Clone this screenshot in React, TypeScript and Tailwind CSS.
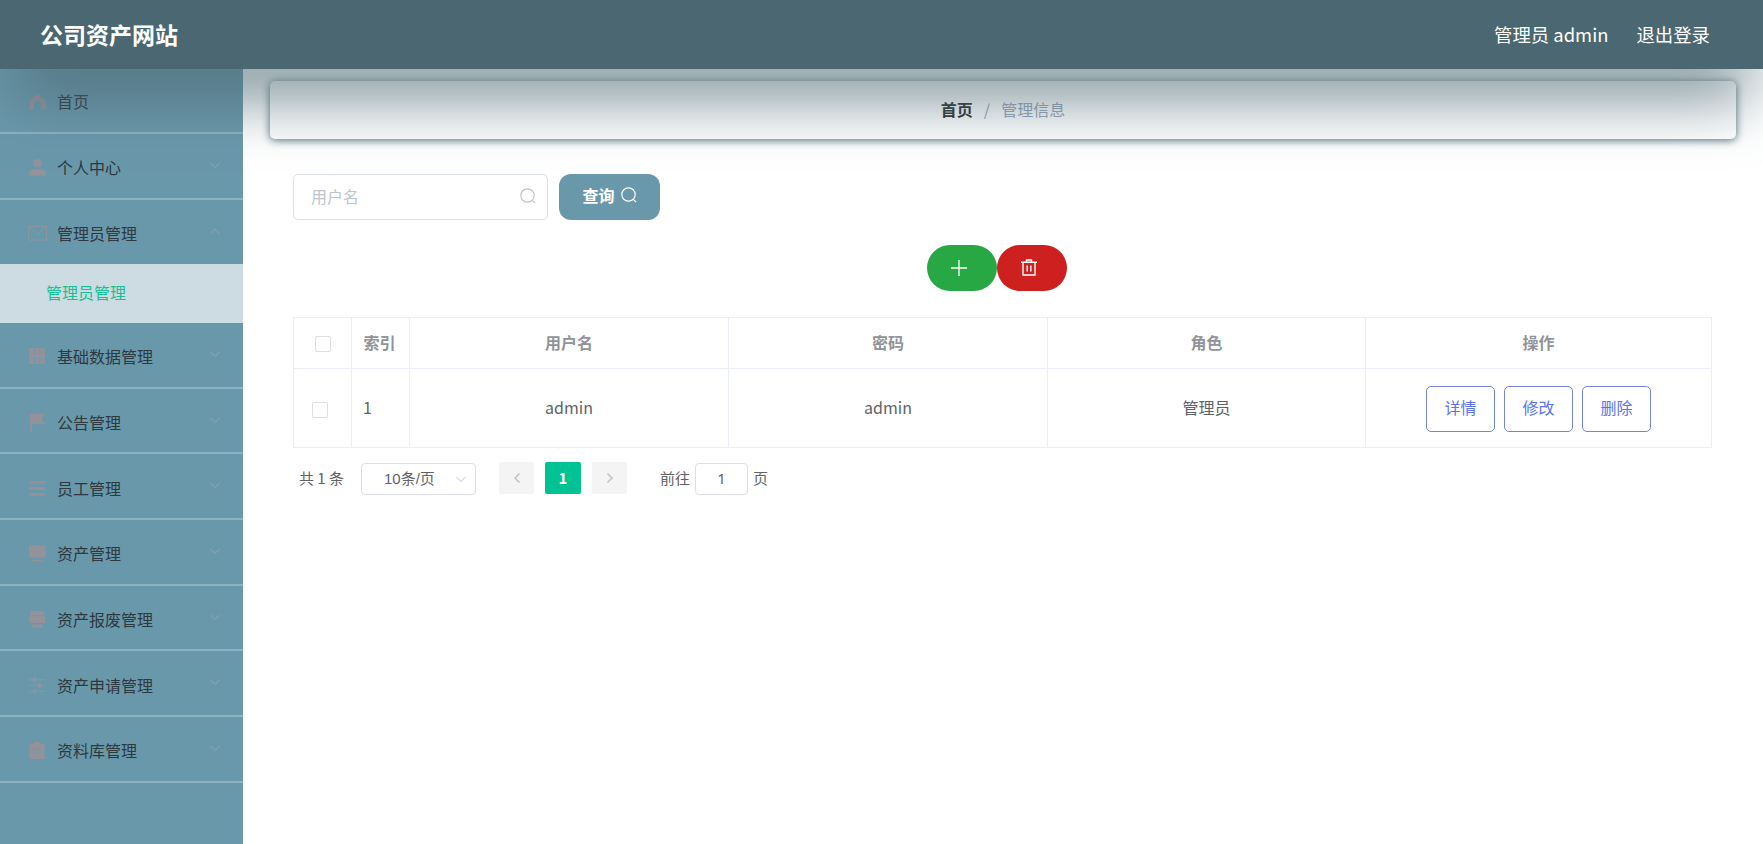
import type { ReactNode } from "react";

const icons: Record<string, ReactNode> = {
  home: <path d="M8.500 0.500 L17 8 V16.500 H12 V11 a3.500 3 0 0 0-7 0 V16.500 H0.500 V8 Z" />,
  user: <path d="M8.500 0a4.300 4.300 0 1 1 0 8.600a4.300 4.300 0 0 1 0-8.600zM0 16.500v-2c0-3 2-4 4.500-4h8c2.500 0 4.500 1 4.500 4v2z" />,
  mail: <path d="M-0.500 1.500h18v13.500h-18zM0 2l8.500 7.500L17 2" fill="none" stroke="currentColor" />,
  grid: <path d="M0 0h4.900v4.900H0zM5.600 0h4.900v4.900H5.600zM11.200 0h4.900v4.900h-4.900zM0 5.600h4.900v4.900H0zM5.600 5.600h4.900v4.900H5.600zM11.200 5.600h4.900v4.900h-4.900zM0 11.200h4.900v4.900H0zM5.600 11.200h4.900v4.900H5.600zM11.200 11.200h4.900v4.900h-4.900z" />,
  flag: <path d="M1 0h15l-3.500 5l3.500 5H3v7.500H1z" />,
  list: <path d="M0 1h16v2.500H0zM0 7h4v3H0zM5 7h11v3H5zM0 13h16v2.500H0z" />,
  monitor: <path d="M0 0.500h16.500v12H0zM3 15h10.500v1.200H3z" />,
  printer: <path d="M1.500 0h13v4h-13zM0.500 4.700h15.500v7.300H0.500zM3 13.500h10.500v3H3z" />,
  sliders: <path d="M0 2.200h4V0.500h3v1.700h9.500v1.100H7V5H4V3.300H0zM0 8h9V6.300h3V8h4.500v1.100H12v1.700H9V9.100H0zM0 13.700h4V12h3v1.700h9.500v1.100H7v1.700H4v-1.700H0z" />,
  clipboard: <path fillRule="evenodd" d="M0.500 2h4V0h7v2h4v15h-15zM4 6.500v1h8v-1zM4 10.500v1h8v-1z" />,
};

const topItems = [
  { icon: "home", label: "首页", arrow: false, height: "h-[65px] pt-px" },
  { icon: "user", label: "个人中心", height: "h-[66px] pt-0.5" },
];

const restItems = [
  { icon: "grid", label: "基础数据管理" },
  { icon: "flag", label: "公告管理" },
  { icon: "list", label: "员工管理" },
  { icon: "monitor", label: "资产管理" },
  { icon: "printer", label: "资产报废管理" },
  { icon: "sliders", label: "资产申请管理" },
  { icon: "clipboard", label: "资料库管理" },
];

type MenuItemProps = {
  icon: string;
  label: string;
  arrow?: boolean;
  open?: boolean;
  height?: string;
};

function MenuItem({ icon, label, arrow = true, open = false, height = "h-[65.7px] pt-[3px]" }: MenuItemProps) {
  return (
    <div className={`flex items-center border-b-2 border-white/25 pl-[29px] pr-[22px] text-base text-[#2d383f] ${height}`}>
      <svg viewBox="0 0 17 17" className="mt-px h-[17px] w-[17px] overflow-visible text-[#8d95a0]" fill="#93929b">
        {icons[icon]}
      </svg>
      <span className="ml-[11px] flex-1">{label}</span>
      {arrow && (
        <svg viewBox="0 0 12 12" className="-mt-[5px] h-3 w-3 text-[#839fab]" fill="none" stroke="currentColor" strokeWidth="1.1">
          <path d={open ? "M1.500 8.500L6 4l4.500 4.500" : "M1.500 4L6 8.500L10.500 4"} />
        </svg>
      )}
    </div>
  );
}

function SearchIcon() {
  return (
    <svg viewBox="0 0 16 16" className="h-4 w-4" fill="none" stroke="currentColor" strokeWidth="1.2">
      <circle cx="7.500" cy="7.500" r="6.700" />
      <path d="M12.300 12.300L15 15" />
    </svg>
  );
}

function PlusIcon() {
  return (
    <svg viewBox="0 0 16 16" className="h-4 w-4" fill="none" stroke="currentColor" strokeWidth="1.3">
      <path d="M8 0v16M0 8h16" />
    </svg>
  );
}

function TrashIcon() {
  return (
    <svg viewBox="0 0 16 17" className="h-[17px] w-4" fill="none" stroke="currentColor" strokeWidth="1.4">
      <path d="M0 3.200h16M5.500 3V1h5v2M2 3.200V16h12V3.200M6.200 6.500v6M9.800 6.500v6" />
    </svg>
  );
}

function Chevron({ d, className }: { d: string; className: string }) {
  return (
    <svg viewBox="0 0 12 12" className={className} fill="none" stroke="currentColor">
      <path d={d} />
    </svg>
  );
}

export default function App() {
  return (
    <div className="flex h-[844px] flex-col overflow-hidden bg-white font-['Noto_Sans_CJK_SC',sans-serif] text-base text-[#606266]">
      <header className="relative z-10 flex h-[69px] shrink-0 items-center justify-between bg-[#4b6872] pl-10 pr-[53px] text-white shadow-[0_33px_67px_-11px_#4b6872]">
        <h1 className="text-[23px] font-bold">公司资产网站</h1>
        <div className="flex gap-7 pt-px text-[18.4px]">
          <span>管理员 admin</span>
          <span>退出登录</span>
        </div>
      </header>

      <div className="flex min-h-0 flex-1">
        <aside className="w-[243px] shrink-0 bg-[#6a98ab]">
          {topItems.map((item) => <MenuItem key={item.label} {...item} />)}
          <div className="h-16 overflow-hidden">
            <MenuItem icon="mail" label="管理员管理" open />
          </div>
          <div className="flex h-[59px] items-center bg-[#cddce3] pb-[3px] pl-[46px] text-[#18bf94]">管理员管理</div>
          {restItems.map((item) => <MenuItem key={item.label} {...item} />)}
        </aside>

        <main className="flex-1 pl-[27px] pr-7 pt-3">
          <nav className="flex h-[58px] items-center justify-center rounded-[5px] bg-white pb-0.5 shadow-[0_1px_9px_#4b6872]">
            <span className="font-bold text-[#303133]">首页</span>
            <span className="mx-[11px] text-[#97a8be]">/</span>
            <span className="text-[#97a8be]">管理信息</span>
          </nav>

          <div className="pl-[23px] pr-6 pt-[35px]">
            <div className="flex gap-[11px]">
              <div className="flex h-[46px] w-[255px] items-center justify-between rounded-[5px] border border-[#dcdfe6] pb-[3px] pl-[17px] pr-[11px] text-[#c0c4cc]">
                <span>用户名</span>
                <SearchIcon />
              </div>
              <button className="flex h-[46px] w-[101px] items-center justify-center gap-1.5 rounded-xl bg-[#6a98ab] pb-1 font-bold text-white">
                查询
                <SearchIcon />
              </button>
            </div>

            <div className="mt-[25px] flex justify-center pr-3">
              <button className="flex h-[46px] w-[70px] items-center justify-center rounded-[23px] bg-[#28a745] pb-px pr-1.5 text-white">
                <PlusIcon />
              </button>
              <button className="flex h-[46px] w-[70px] items-center justify-center rounded-[23px] bg-[#cd201f] pb-px pr-1.5 text-white">
                <TrashIcon />
              </button>
            </div>

            <table className="mt-[26px] w-[1419px] table-fixed border-collapse text-center">
              <colgroup>
                <col className="w-[58px]" />
                <col className="w-[58px]" />
                <col className="w-[319px]" />
                <col className="w-[319px]" />
                <col className="w-[318px]" />
                <col />
              </colgroup>
              <thead>
                <tr className="h-[51px] text-[#909399] *:border *:border-[#ebeef5] *:pb-0.5">
                  <th><div className="mx-auto mt-1 h-4 w-4 rounded-[2px] border border-[#dcdfe6]" /></th>
                  <th className="pr-0.5">索引</th>
                  <th>用户名</th>
                  <th>密码</th>
                  <th>角色</th>
                  <th>操作</th>
                </tr>
              </thead>
              <tbody>
                <tr className="h-[79px] *:border *:border-[#ebeef5] *:pb-0.5">
                  <td><div className="ml-[18px] mt-[5px] h-4 w-4 rounded-[2px] border border-[#dcdfe6]" /></td>
                  <td className="pl-[11px] text-left">1</td>
                  <td>admin</td>
                  <td>admin</td>
                  <td>管理员</td>
                  <td>
                    <div className="mt-[3px] flex justify-center gap-[9px] text-[#5a74e8]">
                      <button className="h-[46px] w-[69px] rounded-[5px] border border-[#7486d4] pb-1">详情</button>
                      <button className="h-[46px] w-[69px] rounded-[5px] border border-[#7486d4] pb-1">修改</button>
                      <button className="h-[46px] w-[69px] rounded-[5px] border border-[#7486d4] pb-1">删除</button>
                    </div>
                  </td>
                </tr>
              </tbody>
            </table>

            <div className="mt-[15px] flex h-8 items-center pl-[6px] text-[15px]">
              <span className="w-[62px] pb-0.5">共 1 条</span>
              <div className="flex h-8 w-[115px] items-center justify-between rounded border border-[#dcdfe6] pl-[22px] pr-2 font-['Liberation_Sans','Noto_Sans_CJK_SC',sans-serif]">
                <span>10条/页</span>
                <Chevron d="M1.500 4L6 8.500L10.500 4" className="h-3 w-3 text-[#c0c4cc]" />
              </div>
              <div className="-mt-0.5 ml-[23px] flex gap-[11px]">
                <span className="flex h-8 w-[35px] items-center justify-center rounded-[2px] bg-[#f4f4f5]">
                  <Chevron d="M8.500 1.500L4 6L8.500 10.500" className="h-3 w-3 stroke-[1.6] text-[#c0c4cc]" />
                </span>
                <span className="flex h-8 w-9 items-center justify-center rounded-[2px] bg-[#00c292] font-bold text-white">1</span>
                <span className="flex h-8 w-[35px] items-center justify-center rounded-[2px] bg-[#f4f4f5]">
                  <Chevron d="M3.500 1.500L8 6L3.500 10.500" className="h-3 w-3 stroke-[1.6] text-[#c0c4cc]" />
                </span>
              </div>
              <span className="ml-[33px] pb-0.5">前往</span>
              <span className="mx-[5px] flex h-8 w-[53px] items-center justify-center rounded border border-[#dcdfe6] pb-0.5 font-['Noto_Sans',sans-serif]">1</span>
              <span className="pb-0.5">页</span>
            </div>
          </div>
        </main>
      </div>
    </div>
  );
}
